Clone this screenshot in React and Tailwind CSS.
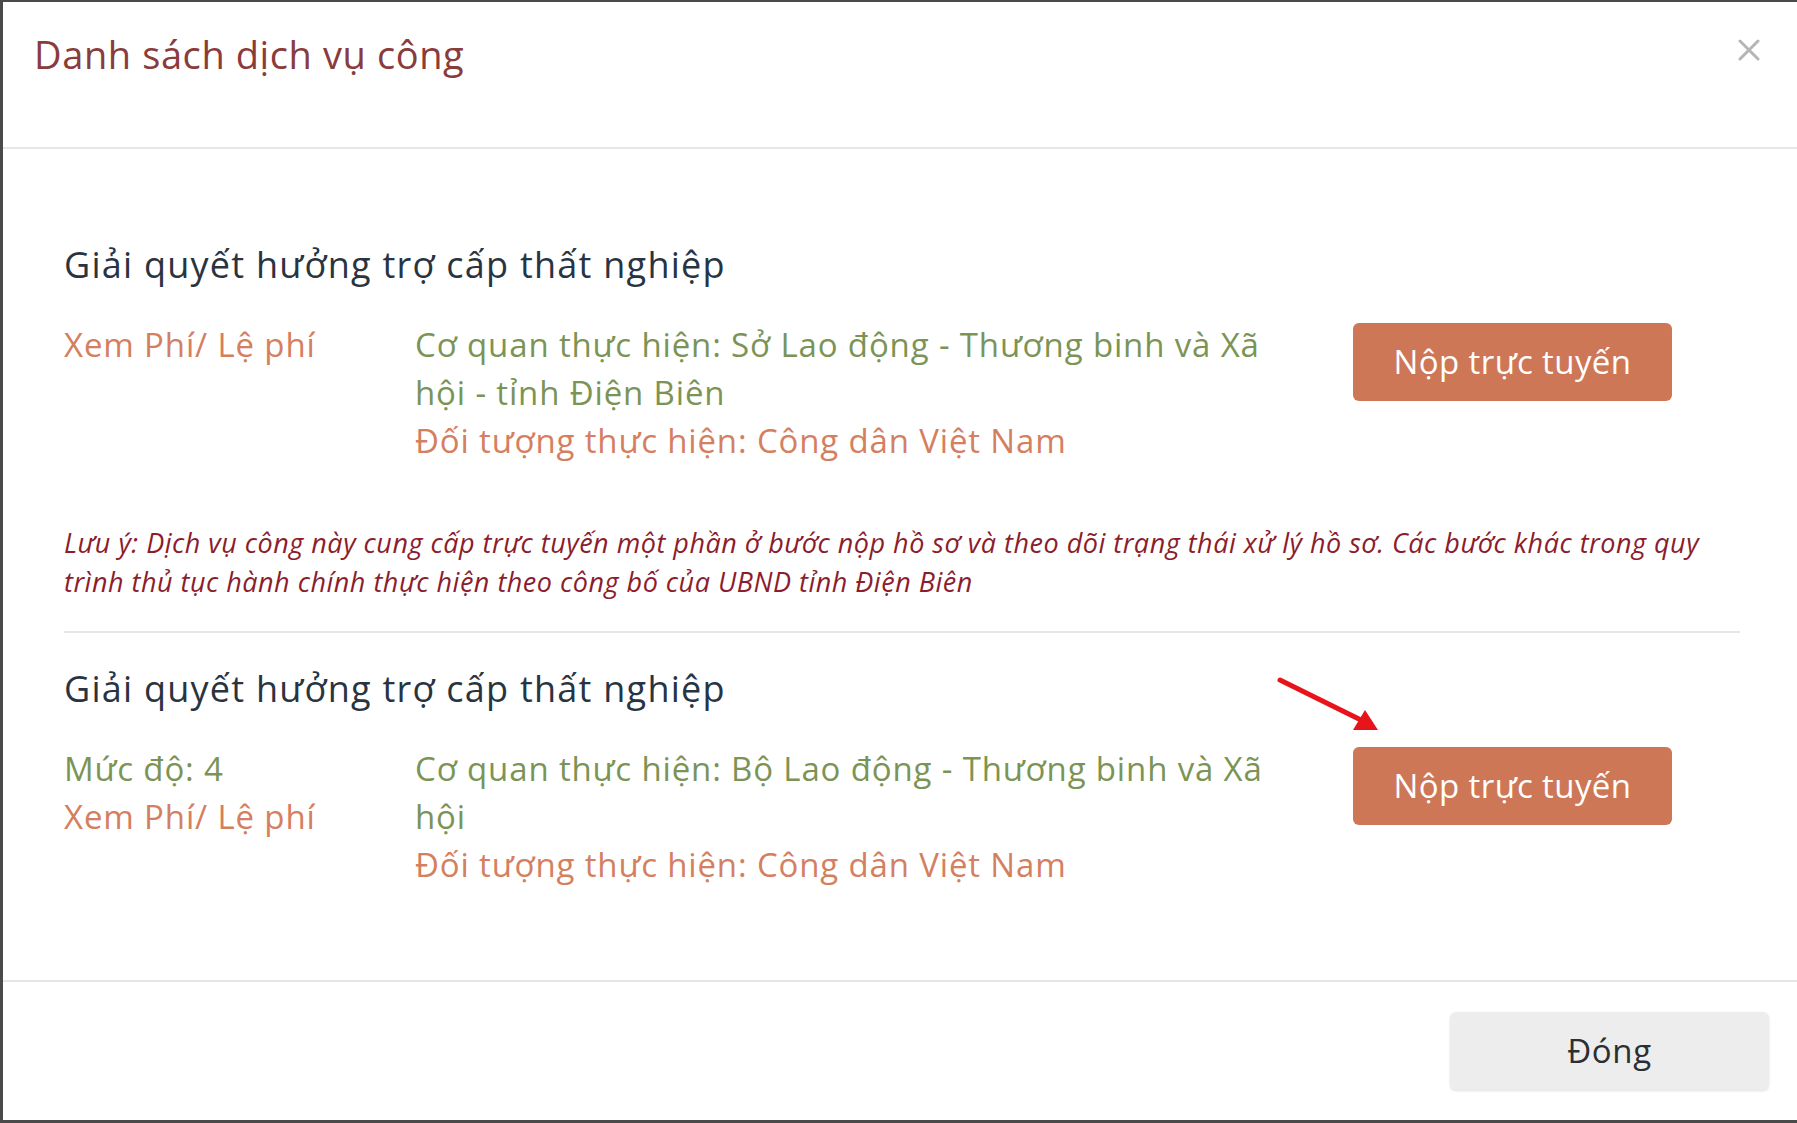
import React from 'react';

const services = [
  {
    level: null,
    agency: 'Cơ quan thực hiện: Sở Lao động - Thương binh và Xã hội - tỉnh Điện Biên',
    note: true,
  },
  {
    level: 'Mức độ: 4',
    agency: 'Cơ quan thực hiện: Bộ Lao động - Thương binh và Xã hội',
    note: false,
  },
];

function ServiceRow({ item }) {
  return (
    <div className="mt-9 flex items-start text-[33px] leading-[48px] tracking-[0.85px]">
      <div className="w-[351px] shrink-0">
        {item.level && <div className="text-[#7b9456]">{item.level}</div>}
        <div className="text-[#d4805f]">Xem Phí/ Lệ phí</div>
      </div>
      <div className="w-[880px] shrink-0">
        <div className="text-[#7b9456]">{item.agency}</div>
        <div className="text-[#d4805f]">Đối tượng thực hiện: Công dân Việt Nam</div>
      </div>
      <button className="ml-[58px] mt-[2px] h-[78px] w-[319px] shrink-0 rounded-[6px] bg-[#cd7756] text-[33px] tracking-[0.4px] text-white">
        Nộp trực tuyến
      </button>
    </div>
  );
}

export default function App() {
  return (
    <div
      className="relative flex h-[1123px] w-full flex-col overflow-hidden border-t-2 border-b-[3px] border-l-[3px] border-[#4a4a4a] bg-white"
      style={{ fontFamily: '"Open Sans", "Noto Sans", sans-serif' }}
    >
      {/* header */}
      <div className="flex h-[147px] shrink-0 items-start justify-between border-b-2 border-[#e6e6e6] pl-[31px] pr-[37px]">
        <h1 className="mt-[26px] text-[38px] leading-[52px] tracking-[0.6px] text-[#8a3b3b]">Danh sách dịch vụ công</h1>
        <button className="mt-[37px] text-[#b5b5b5]">
          <svg width="22" height="22" viewBox="0 0 22 22">
            <path d="M2 2L20 20M20 2L2 20" stroke="currentColor" strokeWidth="3" strokeLinecap="round" />
          </svg>
        </button>
      </div>

      {/* body */}
      <div className="flex-1 pl-[61px] pr-[57px] pt-[96px]">
        {services.map((item, i) => (
          <div key={i}>
            {i > 0 && <div className="mt-[30px] h-[2px] bg-[#e6e6e6]" />}
            <h2 className={`${i > 0 ? 'mt-9' : ''} text-[36px] leading-[40px] tracking-[1.25px] text-[#283441]`}>
              Giải quyết hưởng trợ cấp thất nghiệp
            </h2>
            <ServiceRow item={item} />
            {item.note && (
              <p className="mt-[58px] text-[27px] italic leading-[39px] tracking-[0.5px] text-[#8b1d2c]">
                Lưu ý: Dịch vụ công này cung cấp trực tuyến một phần ở bước nộp hồ sơ và theo dõi trạng thái xử lý hồ sơ. Các bước khác trong quy trình thủ tục hành chính thực hiện theo công bố của UBND tỉnh Điện Biên
              </p>
            )}
          </div>
        ))}
      </div>

      {/* footer */}
      <div className="flex h-[140px] shrink-0 justify-end border-t-2 border-[#e6e6e6] pr-[28px] pt-[30px]">
        <button className="h-[78px] w-[319px] rounded-[6px] bg-[#ededed] text-[33px] tracking-[0.6px] text-[#2b2f33] shadow-sm">
          Đóng
        </button>
      </div>

      {/* pointer arrow */}
      <svg className="absolute left-[1270px] top-[670px]" width="115" height="65" viewBox="0 0 115 65">
        <line x1="7" y1="8" x2="92" y2="50" stroke="#e8141c" strokeWidth="5" strokeLinecap="round" />
        <polygon points="105,58 80,58 92,38" fill="#e8141c" />
      </svg>
    </div>
  );
}
